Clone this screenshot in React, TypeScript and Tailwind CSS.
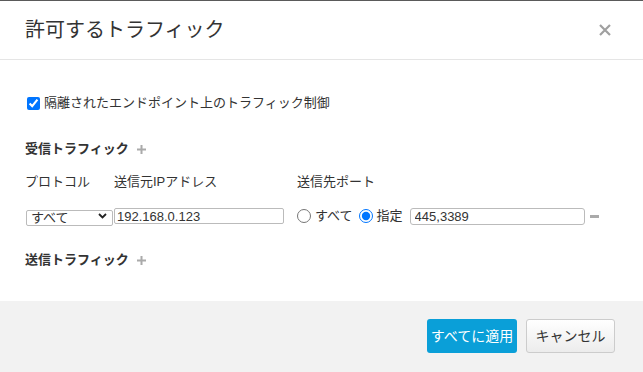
import { useState } from 'react'

const font = "font-['Liberation_Sans','Noto_Sans_CJK_JP',sans-serif]"

function PlusIcon() {
  return (
    <svg width="9" height="9" viewBox="0 0 9 9" className="ml-[8px]">
      <rect x="3.5" y="0" width="2" height="9" fill="#aaa" />
      <rect x="0" y="3.5" width="9" height="2" fill="#aaa" />
    </svg>
  )
}

export default function App() {
  const [isolated, setIsolated] = useState(true)
  const [portMode, setPortMode] = useState<'all' | 'some'>('some')

  return (
    <div className={`${font} w-[643px] h-[372px] bg-white text-[#333] border-t border-[#5a5a5a] flex flex-col`}>
      {/* Header */}
      <div className="h-[59px] flex items-center justify-between pl-[25px] pr-[31px] border-b border-[#e5e5e5]">
        <h1 className="text-[20px] leading-none text-[#333]">許可するトラフィック</h1>
        <button className="w-[14px] h-[14px] flex items-center justify-center">
          <svg width="12" height="12" viewBox="0 0 12 12">
            <path d="M1 1 L11 11 M11 1 L1 11" stroke="#a0a0a0" strokeWidth="2.2" />
          </svg>
        </button>
      </div>

      {/* Body */}
      <div className="flex-1 px-[25px] text-[13px]">
        <label className="mt-[33px] h-[20px] flex items-center gap-[4px]">
          <input
            type="checkbox"
            checked={isolated}
            onChange={() => setIsolated(!isolated)}
            className="w-[13px] h-[13px] m-0 ml-[2px]"
          />
          <span>隔離されたエンドポイント上のトラフィック制御</span>
        </label>

        <div className="mt-[26px] h-[20px] flex items-center font-bold">
          <span>受信トラフィック</span>
          <PlusIcon />
        </div>

        <div className="mt-[13px] h-[20px] flex items-center">
          <span className="w-[89px]">プロトコル</span>
          <span className="w-[183px]">送信元IPアドレス</span>
          <span>送信先ポート</span>
        </div>

        <div className="mt-[14px] h-[20px] flex items-center">
          <div className="relative ml-[1px] w-[87px] h-[16px]">
            <select className="appearance-none w-full h-full border border-[#bbb] rounded-[2px] pl-[4px] text-[13px] leading-none bg-white">
              <option>すべて</option>
              <option>TCP</option>
              <option>UDP</option>
            </select>
            <svg width="9" height="6" viewBox="0 0 9 6" className="absolute right-[6px] top-[5px] pointer-events-none">
              <path d="M1 1 L4.5 4.5 L8 1" stroke="#222" strokeWidth="1.8" fill="none" />
            </svg>
          </div>
          <input
            defaultValue="192.168.0.123"
            className="ml-[1px] w-[170px] h-[16px] border border-[#bbb] rounded-[2px] px-[2px] text-[13px] leading-none outline-none"
          />
          <label className="ml-[13px] flex items-center gap-[4px]">
            <input
              type="radio"
              name="port"
              checked={portMode === 'all'}
              onChange={() => setPortMode('all')}
              className="w-[14px] h-[14px] m-0"
            />
            <span>すべて</span>
          </label>
          <label className="ml-[6px] flex items-center gap-[4px]">
            <input
              type="radio"
              name="port"
              checked={portMode === 'some'}
              onChange={() => setPortMode('some')}
              className="w-[14px] h-[14px] m-0"
            />
            <span>指定</span>
          </label>
          <input
            defaultValue="445,3389"
            className="ml-[7px] w-[175px] h-[17px] border border-[#bbb] rounded-[3px] px-[4px] text-[13px] leading-none outline-none"
          />
          <span className="ml-[5px] w-[9px] h-[3px] bg-[#aaa]" />
        </div>

        <div className="mt-[24px] h-[20px] flex items-center font-bold">
          <span>送信トラフィック</span>
          <PlusIcon />
        </div>
      </div>

      {/* Footer */}
      <div className="h-[71px] bg-[#f2f2f2] flex justify-end items-start pt-[18px] pr-[28px] gap-[9px]">
        <button className="w-[90px] h-[34px] rounded-[3px] bg-[#0a9fd8] text-white text-[14px]">
          すべてに適用
        </button>
        <button className="w-[89px] h-[34px] rounded-[3px] border border-[#ccc] bg-gradient-to-b from-white to-[#ececec] text-[#333] text-[14px]">
          キャンセル
        </button>
      </div>
    </div>
  )
}
